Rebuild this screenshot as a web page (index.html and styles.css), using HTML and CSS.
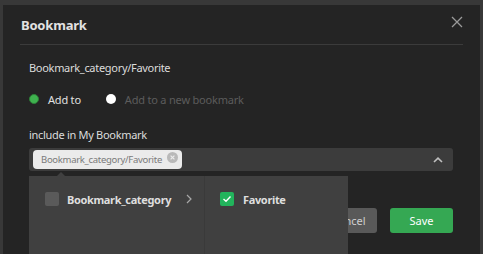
FILE: index.html
```html
<!DOCTYPE html>
<html>
<head>
<meta charset="utf-8">
<link rel="stylesheet" href="styles.css">
</head>
<body>
<div class="dialog">
  <div class="header">
    <div class="title">Bookmark</div>
    <svg class="close" width="12" height="12" viewBox="0 0 12 12"><path d="M1 1L11 11M11 1L1 11" stroke="#9a9a9a" stroke-width="1.3" fill="none"/></svg>
  </div>
  <div class="content">
    <div class="path">Bookmark_category/Favorite</div>
    <div class="radios">
      <label class="radio"><span class="dot on"></span><span class="rlabel">Add to</span></label>
      <label class="radio"><span class="dot off"></span><span class="rlabel muted">Add to a new bookmark</span></label>
    </div>
    <div class="field-label">include in My Bookmark</div>
    <div class="select-wrap">
      <div class="select">
        <span class="tag">Bookmark_category/Favorite<svg class="tag-x" width="11" height="11" viewBox="0 0 11 11"><circle cx="5.5" cy="5.5" r="5.5" fill="#b9b9b9"/><path d="M3.6 3.6L7.4 7.4M7.4 3.6L3.6 7.4" stroke="#ececec" stroke-width="1.2"/></svg></span>
        <svg class="chev" width="10" height="6" viewBox="0 0 10 6"><path d="M1 5L5 1.2L9 5" stroke="#c0c0c0" stroke-width="1.6" fill="none"/></svg>
      </div>
      <div class="menu">
        <span class="caret"></span>
        <div class="col col1">
          <div class="opt"><span class="cb"></span><span class="olabel">Bookmark_category</span><svg class="arrow" width="6" height="10" viewBox="0 0 6 10"><path d="M1 1L5 5L1 9" stroke="#a8a8a8" stroke-width="1.2" fill="none"/></svg></div>
        </div>
        <div class="col col2">
          <div class="opt"><span class="cb checked"><svg width="10" height="8" viewBox="0 0 10 8"><path d="M1.5 4L4 6.3L8.5 1.5" stroke="#fff" stroke-width="1.4" fill="none"/></svg></span><span class="olabel">Favorite</span></div>
        </div>
      </div>
    </div>
    <div class="actions">
      <button class="btn cancel">Cancel</button>
      <button class="btn save">Save</button>
    </div>
  </div>
</div>
</body>
</html>
```
FILE: styles.css
```css
html, body {
  margin: 0;
  padding: 0;
}
body {
  width: 483px;
  height: 254px;
  overflow: hidden;
  background: #383838;
  font-family: "Noto Sans", "Open Sans", sans-serif;
  color: #dcdcdc;
}
.dialog {
  margin: 5px 3px 0 3px;
  height: 249px;
  background: #242424;
  box-sizing: border-box;
}
.header {
  margin: 0 17px;
  height: 39px;
  border-bottom: 1px solid #3b3b3b;
  display: flex;
  align-items: center;
  justify-content: space-between;
  padding-left: 1px;
}
.title {
  font-size: 13px;
  font-weight: 700;
  color: #e2e2e2;
  letter-spacing: -0.2px;
}
.close {
  margin-top: -6px;
}
.content {
  padding: 15px 27px 0 26px;
}
.path {
  font-size: 11px;
  line-height: 15px;
  color: #dcdcdc;
  letter-spacing: -0.3px;
}
.radios {
  display: flex;
  align-items: center;
  gap: 25px;
  margin-top: 16px;
  height: 16px;
}
.radio {
  display: flex;
  align-items: center;
}
.dot {
  width: 10px;
  height: 10px;
  border-radius: 50%;
  box-sizing: border-box;
  margin-right: 9px;
}
.dot.on {
  background: #3fb24f;
  border: 1px solid #2c7f38;
}
.dot.off {
  background: #ffffff;
  margin-right: 9px;
}
.rlabel {
  font-size: 11px;
  color: #e0e0e0;
  letter-spacing: -0.2px;
}
.rlabel.muted {
  color: #5c5c5c;
}
.field-label {
  margin-top: 20px;
  font-size: 11px;
  line-height: 15px;
  color: #dcdcdc;
  letter-spacing: -0.3px;
}
.select-wrap {
  position: relative;
  margin-top: 6px;
}
.select {
  height: 23px;
  background: #3c3c3c;
  border-radius: 3px;
  display: flex;
  align-items: center;
  justify-content: space-between;
  padding: 0 10px 0 4px;
}
.tag {
  display: flex;
  align-items: center;
  height: 19px;
  background: #ebebeb;
  border-radius: 4px;
  padding: 0 4px 0 8px;
  font-size: 9.5px;
  color: #7a7a7a;
  gap: 5px;
  letter-spacing: -0.3px;
}
.tag-x {
  margin-top: -4px;
}
.menu {
  position: absolute;
  left: 0;
  top: 28px;
  width: 319px;
  height: 80px;
  background: #404040;
  display: flex;
  z-index: 2;
}
.caret {
  position: absolute;
  top: -4px;
  left: 28px;
  width: 0;
  height: 0;
  border-left: 4px solid transparent;
  border-right: 4px solid transparent;
  border-bottom: 4px solid #404040;
}
.col1 {
  width: 175px;
  border-right: 1px solid #3a3a3a;
}
.col2 {
  flex: 1;
}
.opt {
  display: flex;
  align-items: center;
  height: 16px;
  margin-top: 15px;
  padding-left: 16px;
}
.col2 .opt {
  padding-left: 15px;
}
.cb {
  width: 14px;
  height: 14px;
  border-radius: 2px;
  background: #5a5a5a;
  margin-right: 8px;
  display: flex;
  align-items: center;
  justify-content: center;
}
.cb.checked {
  background: #22b45c;
  margin-right: 9px;
}
.olabel {
  font-size: 11px;
  font-weight: 700;
  color: #dedede;
  letter-spacing: -0.35px;
}
.arrow {
  margin-left: auto;
  margin-right: 12px;
}
.actions {
  display: flex;
  justify-content: flex-end;
  gap: 13px;
  margin-top: 37px;
}
.btn {
  height: 25px;
  border: 0;
  border-radius: 3px;
  font-family: "Noto Sans", "Open Sans", sans-serif;
  font-size: 11px;
  padding: 0;
}
.cancel {
  width: 57px;
  background: #595959;
  color: #d0d0d0;
}
.save {
  width: 63px;
  background: #35a853;
  color: #ffffff;
}
```
